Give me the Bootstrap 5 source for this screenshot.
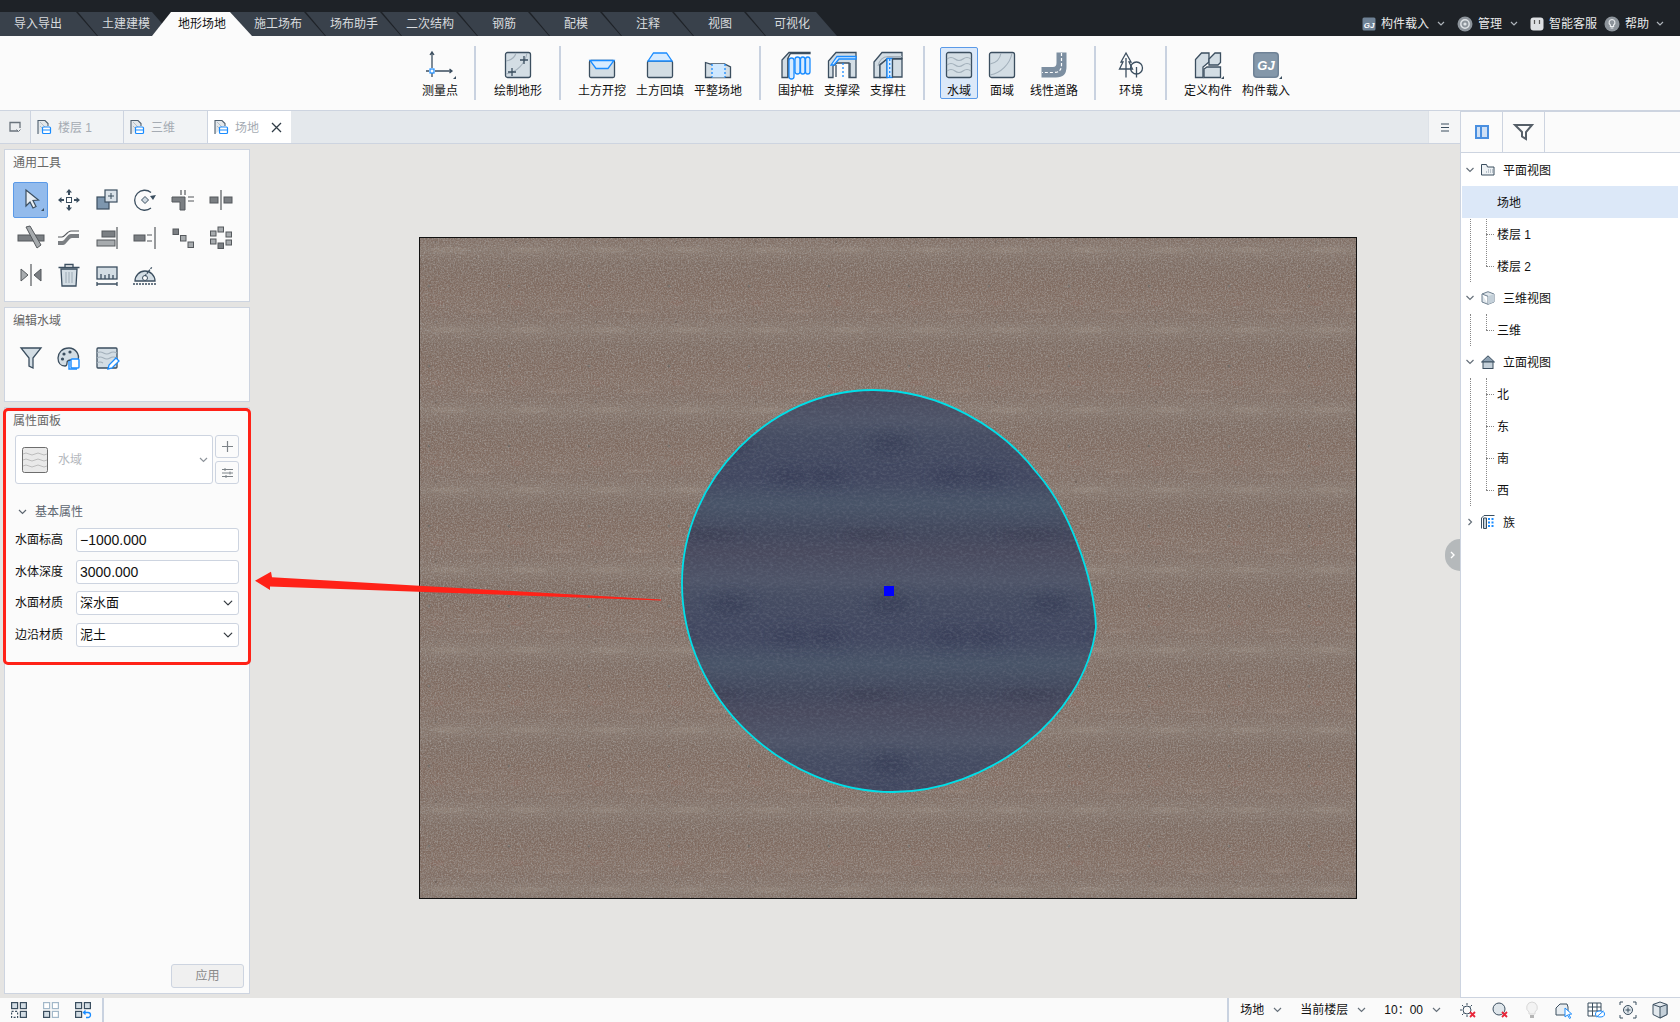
<!DOCTYPE html>
<html lang="zh">
<head>
<meta charset="utf-8">
<title>地形场地</title>
<link href="https://cdn.jsdelivr.net/npm/bootstrap@5.3.0/dist/css/bootstrap.min.css" rel="stylesheet">
<style>
html,body{height:100%;margin:0}
body{font:12px/14px "Liberation Sans","Noto Sans CJK SC",sans-serif;color:#111;overflow:hidden;background:#e5e4e2;position:relative}
svg{display:block;overflow:visible;flex:none}
.app{height:1022px}
.s{fill:none;stroke:#3b4e5f;stroke-width:1.3}
.sf{fill:#d3dde4;stroke:#3b4e5f;stroke-width:1.3}
.sl{fill:none;stroke:#a3b0bb;stroke-width:1.1}
.sb{fill:#d7ebff;stroke:#1a8cff;stroke-width:1.3}
.sbn{fill:none;stroke:#1a8cff;stroke-width:1.3}
.g{fill:#7b7f83;stroke:#55595d;stroke-width:1}
.gl{fill:#a7abae;stroke:#55595d;stroke-width:1}
.l{fill:none;stroke:#55595d;stroke-width:1.2}
.d{fill:#3b4e5f}
.tri{fill:#3b4e5f}
/* top bar */
.topbar{height:36px;background:#1e2227;color:#e9eaeb;flex:none}
.mtabs{height:24px;margin-top:12px}
.mtab{position:relative;height:24px;width:96px;margin-left:-20px;line-height:24px;text-align:center;color:#d8dbde;z-index:0}
.mtab::before{content:"";position:absolute;inset:0;background:#39414b;clip-path:polygon(0 0,calc(100% - 22px) 0,calc(100% - 1px) 100%,20px 100%);z-index:-1}
.mtab.first{width:98px;margin-left:0;padding-right:22px}
.mtab.first::before{clip-path:polygon(0 0,calc(100% - 22px) 0,calc(100% - 1px) 100%,0 100%)}
.mtab.two{width:92px}
.mtab.act{color:#111;z-index:2}
.mtab.act::before{left:-2px;right:-2px;background:#fbfbfb;clip-path:polygon(19px 0,calc(100% - 22px) 0,100% 100%,0 100%)}
.tools-r{height:36px;padding-top:12px;padding-right:16px}
.tr-i{height:24px}
.tr-txt{margin:0 8px 0 5px}
.tr-txt.n{margin-right:7px}
.tr-gap{margin-right:12px}
/* ribbon */
.ribbon{height:75px;background:#fbfbfb;border-bottom:1px solid #cdd4e0;padding-left:411px;flex:none}
.rb{width:58px;height:52px;margin-top:11px;border:1px solid transparent;border-radius:2px}
.rb svg{margin-top:2px}
.rb span{display:block;margin-top:4px;white-space:nowrap;text-align:center}
.rb.w46{width:46px}.rb.w38{width:38px}
.rb.on{background:#dce9f9;border-color:#5b9ae8;margin-right:1px}
.sep{width:2px;height:54px;margin:10px 12px 0;background:#c9d2e0}
.sep.a{margin:10px 13px 0 5px}
.sep.b{margin-right:15px}
.sep.c{margin-left:11px;margin-right:12px}
.sep.e{margin-left:11px}
/* tab bar */
.tabbar{height:33px;background:#e4e8ec;border-bottom:1px solid #cdd4e0;flex:none}
.dtab{height:32px;border-right:1px solid #cdd4e0;background:#f1f3f5;color:#a5abb3;padding-left:5px;gap:6px}
.dtab span{padding-top:2px}
.dtab.home{width:31px;justify-content:center;padding:0;background:#eceef0}
.dtab.t1{width:93px}.dtab.t2{width:84px}
.dtab.t3{width:83px;background:#fff;border:0}
.dtab .x{margin-left:6px}
.menu-b{width:32px;height:32px;background:#f4f5f6;border-left:1px solid #dde2e8}
/* left */
.leftcol{width:254px;padding:5px 0 4px 4px;gap:5px;flex:none}
.pnl{background:#fbfbfb;border:1px solid #cdd4e0;width:246px;color:#111}
.pt{color:#666;height:14px;line-height:14px;margin:6px 0 0 8px}
.p1{height:153px}.p2{height:95px}
.toolgrid{display:grid;grid-template-columns:repeat(6,38px);grid-auto-rows:37.7px;padding:12px 0 0 7px}
.ticon{width:35px;height:36px;margin-left:1px;border:1px solid transparent;border-radius:2px}
.ticon.on{background:#93bbec;border-color:#5b9ae8}
.p3{position:relative}
.red{position:absolute;left:-2px;top:0;width:248px;height:257px;border:3px solid #ff2218;border-radius:5px;pointer-events:none}
.sel{width:198px;height:49px;background:#fff;border:1px solid #cdd4e0;border-radius:3px;padding:0 4px 0 6px;color:#b4b8bd;margin:7px 2px 0 10px}
.swatch{margin-right:10px}
.sel .car{margin-left:auto}
.mini{width:24px;height:23px;background:#fbfbfb;border:1px solid #cdd4e0;border-radius:3px;padding:0}
.mgrp{gap:3px;margin-top:7px}
.sec{margin:21px 0 0 13px;color:#5d6670;gap:8px;height:14px}
.frow{height:31.5px;padding-left:10px}
.frow label{width:61px;flex:none;margin:5px 0 0}
.form-control.fc,.form-select.fc{width:163px;height:24px;min-height:24px;padding:0 2px 0 3px;font:14px/22px "Liberation Sans","Noto Sans CJK SC",sans-serif;border:1px solid #cdd4e0;border-radius:3px;color:#111;box-shadow:none}
.form-select.fc{font-size:13px;padding-left:3px;background-position:right 4px center;background-size:12px 10px}
.rows{margin-top:9px}
.apply{width:73px;height:24px;background:#f0f0f0;border:1px solid #cdd4e0;border-radius:3px;color:#8a8a8a;font-size:12px;line-height:14px;padding:0;margin:auto 5px 5px auto}
/* canvas */
.stage{padding:93px 0 0 165px;position:relative}
.handle{position:absolute;right:0;top:395px;width:15px;height:32px;background:#b5b9bb;border-radius:16px 0 0 16px}
/* right */
.rpanel{width:220px;background:#fff;border-left:1px solid #cdd4e0;border-bottom:1px solid #cdd4e0;flex:none;border-top:1px solid #cdd4e0}
.rtabs{height:41px;background:#fbfbfb;border-bottom:1px solid #cdd4e0;flex:none}
.rt{width:42px;height:40px;border-right:1px solid #cdd4e0}
.tree{margin:1px 0 0;padding:0;list-style:none}
.tn{height:32px;gap:0;padding-left:4px}
.tn .ic{margin:0 8px 0 6px}
.tl{padding-top:2px}
.tsub{position:relative;list-style:none;margin:0;padding:0}
.tsub::before{content:"";position:absolute;left:9px;top:0;bottom:0;border-left:1px dotted #888}
.tsub::after{content:"";position:absolute;left:25px;top:0;bottom:16px;border-left:1px dotted #888}
.tsub li{position:relative;height:32px;line-height:34px;padding-left:36px}
.tsub li::before{content:"";position:absolute;left:25px;width:8px;top:16px;border-top:1px dotted #888}
.tsub li.on{background:#dce8f8;margin:0 2px 0 1px;padding-left:35px;z-index:1}
.tsub li.on::before{display:none}
/* status */
.status{height:24px;background:#fafafa;flex:none}
.st-l{width:104px;border-right:2px solid #c9d2e0;height:24px;gap:16px;padding-left:11px}
.st-r{height:24px;border-left:2px solid #c9d2e0;padding-left:11px}
.st-t{margin-right:9px}
.st-g{margin-right:18px}
.st-ic{gap:14px;margin-left:18px;margin-right:11px}
.arrow{position:absolute;left:240px;top:565px}
</style>
</head>
<body>
<div class="app d-flex flex-column">
  <!-- top -->
  <header class="topbar d-flex justify-content-between">
    <nav class="mtabs d-flex">
      <div class="mtab first">导入导出</div><div class="mtab">土建建模</div><div class="mtab act">地形场地</div><div class="mtab">施工场布</div><div class="mtab">场布助手</div><div class="mtab">二次结构</div><div class="mtab two">钢筋</div><div class="mtab two">配模</div><div class="mtab two">注释</div><div class="mtab two">视图</div><div class="mtab two">可视化</div>
    </nav>
    <div class="tools-r d-flex align-items-center">
      <div class="tr-i d-flex align-items-center"><svg width="14" height="14" viewBox="0 0 14 14"><rect x=".5" y=".5" width="13" height="13" rx="1.5" fill="#6f8296"/><text x="7" y="10.5" text-anchor="middle" font-size="8" font-weight="700" font-style="italic" fill="#fff" font-family="Liberation Sans">GJ</text></svg><span class="tr-txt">构件载入</span><svg class="tr-gap" width="8" height="6" viewBox="0 0 8 6"><path d="M1 1l3 3 3-3" fill="none" stroke="#aeb4ba" stroke-width="1.2"/></svg></div>
      <div class="tr-i d-flex align-items-center"><svg width="16" height="16" viewBox="0 0 16 16"><circle cx="8" cy="8" r="7.5" fill="#8d949b"/><circle cx="8" cy="8" r="4.2" fill="none" stroke="#dfe3e6" stroke-width="1.5"/><circle cx="8" cy="8" r="1.6" fill="#dfe3e6"/></svg><span class="tr-txt">管理</span><svg class="tr-gap" width="8" height="6" viewBox="0 0 8 6"><path d="M1 1l3 3 3-3" fill="none" stroke="#aeb4ba" stroke-width="1.2"/></svg></div>
      <div class="tr-i d-flex align-items-center"><svg width="14" height="14" viewBox="0 0 14 14"><rect x=".5" y=".5" width="13" height="13" rx="3" fill="#dde0e3"/><path d="M4.5 3v4M9.500 3v4" stroke="#555" stroke-width="1.2"/></svg><span class="tr-txt n">智能客服</span></div>
      <div class="tr-i d-flex align-items-center"><svg width="16" height="16" viewBox="0 0 16 16"><circle cx="8" cy="8" r="7.5" fill="#8d949b"/><path d="M8 3.500a3 3 0 0 1 1.600 5.500V10.500H6.400V9A3 3 0 0 1 8 3.500zM6.600 12h2.800" fill="none" stroke="#eef0f2" stroke-width="1.1"/></svg><span class="tr-txt n">帮助</span><svg width="8" height="6" viewBox="0 0 8 6"><path d="M1 1l3 3 3-3" fill="none" stroke="#aeb4ba" stroke-width="1.2"/></svg></div>
    </div>
  </header>

  <!-- ribbon -->
  <section class="ribbon d-flex align-items-start">
    <div class="rb d-flex flex-column align-items-center"><svg width="30" height="30" viewBox="0 0 30 30"><path class="s" d="M7 3v15M7 23v4M4 21H1M10 21h17M5 5l2-3 2 3M24.500 19l2.500 2-2.500 2" stroke-width="1"/><rect x="5" y="19" width="4" height="4" fill="#fff" stroke="#1a8cff" stroke-width="1.2"/><path class="tri" d="M31 26v3h-3z"/></svg><span>测量点</span></div>
    <div class="sep a"></div>
    <div class="rb d-flex flex-column align-items-center"><svg width="30" height="30" viewBox="0 0 30 30"><rect class="sf" x="2.500" y="2.500" width="25" height="25" rx="2"/><path class="sl" d="M3 11C9 10 12 7 13 3M3 24C14 22 22 14 24 3"/><path class="s" d="M21 6v8M17 10h8M9 18v8M5 22h8" stroke-width="1"/></svg><span>绘制地形</span></div>
    <div class="sep"></div>
    <div class="rb d-flex flex-column align-items-center"><svg width="30" height="30" viewBox="0 0 30 30"><rect class="sf" x="2.500" y="10.500" width="25" height="17" rx="1.500"/><path class="sb" d="M3 10.500H27L21 18.500H9z" fill="#eaf4ff"/></svg><span>土方开挖</span></div>
    <div class="rb d-flex flex-column align-items-center"><svg width="30" height="30" viewBox="0 0 30 30"><rect class="sf" x="2.500" y="11" width="25" height="16.500" rx="1.500"/><path class="sb" d="M3 11L8.500 3H21.500L27 11z"/></svg><span>土方回填</span></div>
    <div class="rb d-flex flex-column align-items-center"><svg width="30" height="30" viewBox="0 0 30 30"><path class="sf" d="M2.500 12.500l5 1.500h14l6 3v10.500H2.500z"/><path d="M9 14h13v13.500H9z" fill="#cfe8ff"/><path class="sbn" stroke-dasharray="2 2" d="M9 14v13.500M22 14v13.500"/></svg><span>平整场地</span></div>
    <div class="sep"></div>
    <div class="rb w46 d-flex flex-column align-items-center"><svg width="30" height="30" viewBox="0 0 30 30"><path class="sf" d="M1 27.500V10L8 2.500h21v1H9.500L7 8v19.500z"/><path class="s" d="M7 27V8"/><rect class="sb" x="8" y="8" width="5" height="21" rx="2.500"/><rect class="sb" x="14" y="7" width="5" height="17" rx="2.500"/><rect class="sb" x="19.500" y="7" width="4.500" height="17" rx="2.250"/><rect class="sb" x="24.500" y="7" width="4.500" height="17" rx="2.250"/></svg><span>围护桩</span></div>
    <div class="rb w46 d-flex flex-column align-items-center"><svg width="30" height="30" viewBox="0 0 30 30"><path class="sf" d="M1.500 27.500V11L9 2.500h20v25H22V13H10l-4 3v11.500z"/><path class="sb" d="M4 15L10 6.500H29V9H12L7 15z"/><path class="s" d="M9 27V15M23 27V13"/><path class="sbn" stroke-dasharray="2 2" d="M16 13v14"/></svg><span>支撑梁</span></div>
    <div class="rb w46 d-flex flex-column align-items-center"><svg width="30" height="30" viewBox="0 0 30 30"><path class="sf" d="M1 27.500V12L9 2.500h20v6H15l-8 6v13z"/><path class="sl" d="M5 16Q7 7 15 6.500H29"/><path class="sf" d="M7 15l7-6v18.500H7z"/><rect class="sb" x="14" y="8.500" width="5.500" height="19"/><path class="sbn" stroke-dasharray="2 2" d="M16.700 9v18"/><path class="sf" d="M19.500 9H29v18H19.500z"/></svg><span>支撑柱</span></div>
    <div class="sep b"></div>
    <div class="rb w38 on d-flex flex-column align-items-center"><svg width="30" height="30" viewBox="0 0 30 30"><rect class="sf" x="2.500" y="2.500" width="25" height="25" rx="2"/><path class="sl" d="M3 9q4-3 8 0t8 0 8 0M3 15q4-3 8 0t8 0 8 0M3 21q4-3 8 0t8 0 8 0"/></svg><span>水域</span></div>
    <div class="rb w46 d-flex flex-column align-items-center"><svg width="30" height="30" viewBox="0 0 30 30"><rect class="sf" x="2.500" y="2.500" width="25" height="25" rx="2"/><path class="sl" d="M3 14C9 13 13 9 14 3M3 25C14 23 23 14 25 3"/></svg><span>面域</span></div>
    <div class="rb d-flex flex-column align-items-center"><svg width="30" height="30" viewBox="0 0 30 30"><path d="M17.500 2.500h10V17q0 10.500-10.500 10.500H2.500V17H14q3.500 0 3.500-4z" fill="#7d8fa1"/><path d="M22.500 3v12q0 7.500-7.500 7.500H3" fill="none" stroke="#fff" stroke-width="1.200" stroke-dasharray="3 2"/></svg><span>线性道路</span></div>
    <div class="sep e"></div>
    <div class="rb w46 d-flex flex-column align-items-center"><svg width="30" height="30" viewBox="0 0 30 30"><path class="s" d="M10 3l5 9h-2l3.500 7H3.500L7 12H5z"/><path class="s" d="M10 8v19.500"/><circle class="s" cx="20.500" cy="18" r="6"/><path class="s" d="M20.500 17v10.500"/></svg><span>环境</span></div>
    <div class="sep c"></div>
    <div class="rb d-flex flex-column align-items-center"><svg width="30" height="30" viewBox="0 0 30 30"><path class="sf" d="M2.500 27.500V9.500L8.500 3H16v9l-6 5v10.500z"/><path class="sf" d="M16 9l6-6h5.500v9.500L25 15H16z"/><path class="sf" d="M11 27.500V19l3-2h13.500v10.500z"/><path class="tri" d="M31 26v3h-3z"/></svg><span>定义构件</span></div>
    <div class="rb d-flex flex-column align-items-center"><svg width="30" height="30" viewBox="0 0 30 30"><rect x="2" y="2" width="26" height="26" rx="4" fill="#6f8296"/><rect x="3.500" y="3.500" width="23" height="23" rx="3" fill="#8497a9"/><text x="15" y="20" text-anchor="middle" font-size="13" font-weight="700" font-style="italic" fill="#fff" font-family="Liberation Sans">GJ</text><path class="tri" d="M31 26v3h-3z"/></svg><span>构件载入</span></div>
  </section>

  <!-- body -->
  <div class="d-flex flex-grow-1 overflow-hidden">
    <div class="d-flex flex-column flex-grow-1 overflow-hidden">
      <div class="tabbar d-flex">
        <div class="dtab home d-flex align-items-center"><svg width="14" height="14" viewBox="0 0 14 14"><path d="M10 11H2V2.500h10V8" fill="none" stroke="#6a737c" stroke-width="1.300"/><path d="M8.500 9.500l2 2 2-2" fill="none" stroke="#6a737c"/></svg></div>
        <div class="dtab t1 d-flex align-items-center"><svg width="16" height="17" viewBox="0 0 16 17"><path d="M2 15V1.500h7l3 3V7" fill="#e3e7ea" stroke="#4f5f6e" stroke-width="1.100"/><path d="M4 3l5 5M4 7l4 4" stroke="#b5bec6"/><rect x="6.500" y="8" width="8" height="6.500" rx="1" fill="#fff" stroke="#1a8cff" stroke-width="1.200"/><path d="M6.500 11h8" stroke="#1a8cff"/></svg><span>楼层 1</span></div>
        <div class="dtab t2 d-flex align-items-center"><svg width="16" height="17" viewBox="0 0 16 17"><path d="M2 15V1.500h7l3 3V7" fill="#e3e7ea" stroke="#4f5f6e" stroke-width="1.100"/><path d="M4 3l5 5M4 7l4 4" stroke="#b5bec6"/><rect x="6.500" y="8" width="8" height="6.500" rx="1" fill="#fff" stroke="#1a8cff" stroke-width="1.200"/><path d="M6.500 11h8" stroke="#1a8cff"/></svg><span>三维</span></div>
        <div class="dtab t3 d-flex align-items-center"><svg width="16" height="17" viewBox="0 0 16 17"><path d="M2 15V1.500h7l3 3V7" fill="#e3e7ea" stroke="#4f5f6e" stroke-width="1.100"/><path d="M4 3l5 5M4 7l4 4" stroke="#b5bec6"/><rect x="6.500" y="8" width="8" height="6.500" rx="1" fill="#fff" stroke="#1a8cff" stroke-width="1.200"/><path d="M6.500 11h8" stroke="#1a8cff"/></svg><span>场地</span><svg class="x" width="11" height="11" viewBox="0 0 11 11"><path d="M1 1l9 9M10 1l-9 9" stroke="#2f3b46" stroke-width="1.300"/></svg></div>
        <div class="menu-b ms-auto d-flex align-items-center justify-content-center"><svg width="8" height="9" viewBox="0 0 8 9"><path d="M0 1h8M0 4.500h8M0 8h8" stroke="#3b4e5f" stroke-width="1.200"/></svg></div>
      </div>
      <div class="d-flex flex-grow-1 overflow-hidden">
        <aside class="leftcol d-flex flex-column">
          <div class="pnl p1">
            <div class="pt">通用工具</div>
            <div class="toolgrid">
              <div class="ticon on d-flex align-items-center justify-content-center"><svg width="26" height="26" viewBox="0 0 26 26"><path d="M8 3v16l4-4 3 6 3-1.500-3-6 5.500-.5z" fill="#e9eef3" stroke="#3b4e5f" stroke-width="1.200"/><path class="tri" d="M26 21v3h-3z"/></svg></div>
              <div class="ticon d-flex align-items-center justify-content-center"><svg width="26" height="26" viewBox="0 0 26 26"><rect x="10.500" y="10.500" width="5" height="5" fill="#fff" stroke="#3b4e5f"/><path class="d" d="M13 2l3 3.500h-2V8h-2V5.500h-2zM13 24l3-3.500h-2V18h-2v2.500h-2zM2 13l3.500-3v2H8v2H5.500v2zM24 13l-3.500-3v2H18v2h2.500v2z"/></svg></div>
              <div class="ticon d-flex align-items-center justify-content-center"><svg width="26" height="26" viewBox="0 0 26 26"><rect x="3" y="10" width="12" height="12" fill="#7d96ae" stroke="#3b4e5f" stroke-width="1.200"/><rect x="11" y="3" width="12" height="12" fill="#dbe3ea" stroke="#3b4e5f" stroke-width="1.200"/><path d="M17 6v6M14 9h6" stroke="#3b4e5f"/></svg></div>
              <div class="ticon d-flex align-items-center justify-content-center"><svg width="26" height="26" viewBox="0 0 26 26"><path class="s" d="M19 5.500A10 10 0 1 0 19 21"/><path class="d" d="M18 9l6-1-3 5z"/><path d="M13 9.500l3.500 3.500-3.500 3.500-3.500-3.500z" fill="#cfd9e1" stroke="#3b4e5f"/></svg></div>
              <div class="ticon d-flex align-items-center justify-content-center"><svg width="26" height="26" viewBox="0 0 26 26"><path class="g" d="M2 10h13v13h-5V15H2z"/><path class="l" d="M11 3v5M15 3v5M18 10h6M18 14h6"/></svg></div>
              <div class="ticon d-flex align-items-center justify-content-center"><svg width="26" height="26" viewBox="0 0 26 26"><rect class="g" x="2" y="10" width="8" height="6"/><rect class="g" x="16" y="10" width="8" height="6"/><path class="l" d="M13 3v20"/></svg></div>
              <div class="ticon d-flex align-items-center justify-content-center"><svg width="26" height="26" viewBox="0 0 26 26"><rect class="g" x="0" y="10" width="26" height="6"/><path class="gl" d="M8 2l4-1 11 19-4 3z"/></svg></div>
              <div class="ticon d-flex align-items-center justify-content-center"><svg width="26" height="26" viewBox="0 0 26 26"><path class="l" d="M2 12h4c3 0 5-6 9-6h8"/><path d="M2 16h4c3 0 5-7 9-7h8v4h-7c-3 0-6 7-9 7H2z" fill="#7b7f83"/></svg></div>
              <div class="ticon d-flex align-items-center justify-content-center"><svg width="26" height="26" viewBox="0 0 26 26"><rect class="g" x="8" y="6" width="13" height="6"/><rect class="gl" x="3" y="15" width="18" height="6"/><path class="l" d="M23 2v22"/></svg></div>
              <div class="ticon d-flex align-items-center justify-content-center"><svg width="26" height="26" viewBox="0 0 26 26"><rect class="g" x="2" y="10" width="11" height="6"/><path class="l" d="M15 10h5M15 16h5M23 2v22"/></svg></div>
              <div class="ticon d-flex align-items-center justify-content-center"><svg width="26" height="26" viewBox="0 0 26 26"><rect class="g" x="3" y="4" width="5.500" height="5.500"/><rect class="gl" x="10.500" y="10.500" width="5.500" height="5.500"/><rect class="gl" x="18" y="17" width="5.500" height="5.500"/></svg></div>
              <div class="ticon d-flex align-items-center justify-content-center"><svg width="26" height="26" viewBox="0 0 26 26"><rect class="gl" x="10" y="2" width="5.500" height="5"/><rect class="gl" x="2.500" y="6" width="5.500" height="5"/><rect class="gl" x="18" y="7" width="5.500" height="5"/><rect class="gl" x="2.500" y="14" width="5.500" height="5"/><rect class="gl" x="18" y="15" width="5.500" height="5"/><rect class="g" x="10" y="18" width="5.500" height="5.500"/></svg></div>
              <div class="ticon d-flex align-items-center justify-content-center"><svg width="26" height="26" viewBox="0 0 26 26"><path class="gl" d="M3 7l7 6-7 6z"/><path class="g" d="M23 7l-7 6 7 6z"/><path class="l" d="M13 2v22"/></svg></div>
              <div class="ticon d-flex align-items-center justify-content-center"><svg width="26" height="26" viewBox="0 0 26 26"><path class="sf" d="M5 7h16l-1 17H6z"/><path class="s" d="M2.500 5.500h21M9 5V2.500h8V5"/><path class="sl" d="M10 10v11M13 10v11M16 10v11"/></svg></div>
              <div class="ticon d-flex align-items-center justify-content-center"><svg width="26" height="26" viewBox="0 0 26 26"><rect class="sf" x="3" y="5" width="20" height="12"/><path class="s" d="M7 17v-5M11 17v-4M15 17v-5M19 17v-4M3 22h20M3 20v4M23 20v4"/></svg></div>
              <div class="ticon d-flex align-items-center justify-content-center"><svg width="26" height="26" viewBox="0 0 26 26"><path class="sf" d="M3 19a10 10 0 0 1 20 0z"/><circle cx="13" cy="16" r="2.500" fill="#fff" stroke="#3b4e5f"/><path class="s" d="M13 14l7-9M1 22h24" stroke-dasharray="2 1"/></svg></div>
            </div>
          </div>
          <div class="pnl p2">
            <div class="pt">编辑水域</div>
            <div class="toolgrid">
              <div class="ticon d-flex align-items-center justify-content-center"><svg width="26" height="26" viewBox="0 0 26 26"><path class="sf" d="M3 3h20l-8 10v10l-4-2v-8z"/></svg></div>
              <div class="ticon d-flex align-items-center justify-content-center"><svg width="26" height="26" viewBox="0 0 26 26"><path class="sf" d="M13 3C6 3 2 8 2 13c0 5 3 8 7 8 2 0 2-2 2-3 0-2 2-3 4-3h7C24 9 19 3 13 3z"/><circle cx="8" cy="9" r="1.600" class="d"/><circle cx="14" cy="7" r="1.600" class="d"/><circle cx="6.500" cy="14" r="1.600" class="d"/><rect x="15" y="14" width="8" height="9" rx="1" fill="#fff" stroke="#1a8cff" stroke-width="1.400"/><path d="M13 16v8h8" fill="none" stroke="#1a8cff" stroke-width="1.400"/></svg></div>
              <div class="ticon d-flex align-items-center justify-content-center"><svg width="26" height="26" viewBox="0 0 26 26"><rect class="sf" x="3" y="3" width="20" height="20" rx="1"/><path class="sl" d="M3 8q3-2 6.500 0t6.500 0 7 0M3 13q3-2 6.500 0t6.500 0 7 0M3 18q3-2 6 0"/><path d="M14 24l1-4 7-7 3 3-7 7z" fill="#fff" stroke="#1a8cff" stroke-width="1.300"/></svg></div>
            </div>
          </div>
          <div class="pnl p3 flex-grow-1 d-flex flex-column">
            <div class="pt">属性面板</div>
            <div class="d-flex">
              <div class="sel d-flex align-items-center">
                <svg class="swatch" width="26" height="26" viewBox="0 0 26 26"><rect x=".5" y=".5" width="25" height="25" rx="2" fill="#e9e9e9" stroke="#6d6d6d"/><path d="M1 7q3-2 6 0t6 0 6 0 6 0M1 13q3-2 6 0t6 0 6 0 6 0M1 19q3-2 6 0t6 0 6 0 6 0" fill="none" stroke="#bdbdbd"/></svg>
                <span>水域</span>
                <svg class="car" width="9" height="6" viewBox="0 0 9 6"><path d="M1 1l3.500 3.500L8 1" fill="none" stroke="#8d939a" stroke-width="1.200"/></svg>
              </div>
              <div class="mgrp d-flex flex-column">
                <button class="btn mini d-flex align-items-center justify-content-center" type="button" aria-label="添加"><svg width="11" height="11" viewBox="0 0 11 11"><path d="M5.500 0v11M0 5.500h11" stroke="#7d8388" stroke-width="1.200"/></svg></button>
                <button class="btn mini d-flex align-items-center justify-content-center" type="button" aria-label="设置"><svg width="11" height="10" viewBox="0 0 11 10"><path d="M0 1.500h11M0 5h11M0 8.500h11" stroke="#7d8388"/><path d="M3 0v3M8 3.500v3M4 7v3" stroke="#7d8388"/></svg></button>
              </div>
            </div>
            <div class="sec d-flex align-items-center"><svg width="9" height="6" viewBox="0 0 9 6"><path d="M1 1l3.500 3.500L8 1" fill="none" stroke="#5d6670" stroke-width="1.200"/></svg><span>基本属性</span></div>
            <div class="rows">
              <div class="frow d-flex align-items-start"><label>水面标高</label><input class="form-control fc" value="−1000.000" readonly></div>
              <div class="frow d-flex align-items-start"><label>水体深度</label><input class="form-control fc" value="3000.000" readonly></div>
              <div class="frow d-flex align-items-start"><label>水面材质</label><select class="form-select fc"><option>深水面</option></select></div>
              <div class="frow d-flex align-items-start"><label>边沿材质</label><select class="form-select fc"><option>泥土</option></select></div>
            </div>
            <button class="btn apply" type="button">应用</button>
            <div class="red"></div>
          </div>
        </aside>
        <main class="stage flex-grow-1">
          <svg width="938" height="662" viewBox="419 237 938 662" aria-label="地形画布">
            <defs>
              <linearGradient id="gb" gradientUnits="userSpaceOnUse" x1="0" y1="237" x2="0" y2="317" spreadMethod="repeat">
                <stop offset="0" stop-color="#806d63"/><stop offset=".16" stop-color="#86766c"/><stop offset=".34" stop-color="#7e6c62"/><stop offset=".62" stop-color="#7f6a5f"/><stop offset=".8" stop-color="#826e63"/><stop offset="1" stop-color="#806d63"/>
              </linearGradient>
              <linearGradient id="wb" gradientUnits="userSpaceOnUse" x1="0" y1="437" x2="0" y2="597" spreadMethod="repeat">
                <stop offset="0" stop-color="#454c62"/><stop offset=".25" stop-color="#414760"/><stop offset=".42" stop-color="#485468"/><stop offset=".6" stop-color="#42475c"/><stop offset=".72" stop-color="#494a5e"/><stop offset=".9" stop-color="#4e5468"/><stop offset="1" stop-color="#454c62"/>
              </linearGradient>
              <filter id="grain" x="0" y="0" width="100%" height="100%"><feTurbulence type="fractalNoise" baseFrequency=".6" numOctaves="2" seed="4"/><feColorMatrix type="matrix" values="0 0 0 0 .3  0 0 0 0 .27  0 0 0 0 .25  2 0 0 0 -.85"/></filter>
              <filter id="grain2" x="0" y="0" width="100%" height="100%"><feTurbulence type="fractalNoise" baseFrequency=".7" numOctaves="2" seed="11"/><feColorMatrix type="matrix" values="0 0 0 0 .68  0 0 0 0 .66  0 0 0 0 .64  0 2 0 0 -.85"/></filter>
              <filter id="soft" x="-50%" y="-50%" width="200%" height="200%"><feGaussianBlur stdDeviation="7"/></filter>
              <filter id="fine" x="0" y="0" width="100%" height="100%"><feTurbulence type="fractalNoise" baseFrequency=".3 .45" numOctaves="3" seed="7"/><feColorMatrix type="matrix" values="0 0 0 0 .14  0 0 0 0 .16  0 0 0 0 .22  1.800 0 0 0 -.72"/></filter>
              <pattern id="gp" patternUnits="userSpaceOnUse" x="419" y="237" width="80" height="80"><circle cx="17" cy="5" r="1.300" fill="#5f5650" opacity=".5"/><circle cx="10" cy="49" r="1.500" fill="#5f6460" opacity=".6"/><circle cx="57" cy="21" r="1" fill="#5f5650" opacity=".4"/><ellipse cx="18" cy="66" rx="7" ry="3" fill="#86635a" opacity=".35"/><ellipse cx="60" cy="74" rx="14" ry="2" fill="#a08c80" opacity=".25"/><ellipse cx="30" cy="13" rx="18" ry="3" fill="#a09084" opacity=".25"/></pattern>
              <pattern id="wp" patternUnits="userSpaceOnUse" x="650" y="437" width="160" height="160"><g filter="url(#soft)" fill="#2f3550" opacity=".5"><ellipse cx="80" cy="167" rx="22" ry="10"/><ellipse cx="80" cy="7" rx="22" ry="10"/><ellipse cx="16" cy="40" rx="20" ry="8"/><ellipse cx="140" cy="40" rx="20" ry="8"/></g><g fill="#332f44" opacity=".5" filter="url(#soft)"><ellipse cx="60" cy="98" rx="30" ry="4"/></g></pattern>
              <clipPath id="wc"><path d="M682 583C682 480 770 390 873 390C940 390 1003 428 1037 473C1068 508 1094 575 1096 627C1085 720 985 792 893 792C785 792 682 700 682 583Z"/></clipPath>
            </defs>
            <rect x="419" y="237" width="938" height="662" fill="url(#gb)"/>
            <rect x="419" y="237" width="938" height="662" fill="url(#gp)"/>
            <rect x="419" y="237" width="938" height="662" filter="url(#grain)"/>
            <rect x="419" y="237" width="938" height="662" filter="url(#grain2)" opacity=".35"/>
            <rect x="419.500" y="237.500" width="937" height="661" fill="none" stroke="#111" stroke-width="1"/>
            <g clip-path="url(#wc)">
              <rect x="660" y="380" width="450" height="420" fill="url(#wb)"/>
              <rect x="660" y="380" width="450" height="420" fill="url(#wp)"/>
              <rect x="660" y="380" width="450" height="420" filter="url(#fine)" opacity=".6"/>
            </g>
            <path d="M682 583C682 480 770 390 873 390C940 390 1003 428 1037 473C1068 508 1094 575 1096 627C1085 720 985 792 893 792C785 792 682 700 682 583Z" fill="none" stroke="#00dfe8" stroke-width="1.800"/>
            <rect x="884" y="586" width="10" height="10" fill="#0000ff"/>
          </svg>
          <div class="handle d-flex align-items-center justify-content-center"><svg width="5" height="8" viewBox="0 0 5 8"><path d="M1 1l3 3-3 3" fill="none" stroke="#fff" stroke-width="1.400"/></svg></div>
        </main>
      </div>
    </div>
    <aside class="rpanel d-flex flex-column">
      <div class="rtabs d-flex">
        <div class="rt d-flex align-items-center justify-content-center"><svg width="14" height="14" viewBox="0 0 14 14"><rect x="1" y="1" width="12" height="12" fill="#cfe0f5" stroke="#4a8fe0" stroke-width="2"/><path d="M6 1v12" stroke="#4a8fe0" stroke-width="2"/></svg></div>
        <div class="rt d-flex align-items-center justify-content-center"><svg width="19" height="16" viewBox="0 0 19 16"><path d="M1 1h17l-6 7v7l-4-2.500V8z" fill="none" stroke="#565f68" stroke-width="2"/></svg></div>
      </div>
      <div class="tree">
        <div class="tn d-flex align-items-center"><svg width="10" height="6" viewBox="0 0 10 6"><path d="M1.500 1l3.500 3.500L8.500 1" fill="none" stroke="#66707a" stroke-width="1.200"/></svg><svg class="ic" width="14" height="12" viewBox="0 0 14 12"><path d="M.5 11V.5h5l1 2.500h6.500v8z" fill="#eef2f5" stroke="#3b4e5f"/><path d="M5 8h8M7 6h6" stroke="#8493a1" stroke-dasharray="1 1"/></svg><span class="tl">平面视图</span></div>
        <ul class="tsub"><li class="on">场地</li><li>楼层 1</li><li>楼层 2</li></ul>
        <div class="tn d-flex align-items-center"><svg width="10" height="6" viewBox="0 0 10 6"><path d="M1.500 1l3.500 3.500L8.500 1" fill="none" stroke="#66707a" stroke-width="1.200"/></svg><svg class="ic" width="14" height="14" viewBox="0 0 14 14"><path d="M7 .7l6 2.300v8l-6 2.300-6-2.300V3z" fill="#dfe6eb" stroke="#6d7f8f"/><path d="M1 3l6 2.300V13.300" fill="#fff" stroke="#6d7f8f"/><path d="M7 5.300L13 3v8l-6 2.300z" fill="#c4d0d9"/></svg><span class="tl">三维视图</span></div>
        <ul class="tsub"><li>三维</li></ul>
        <div class="tn d-flex align-items-center"><svg width="10" height="6" viewBox="0 0 10 6"><path d="M1.500 1l3.500 3.500L8.500 1" fill="none" stroke="#66707a" stroke-width="1.200"/></svg><svg class="ic" width="14" height="14" viewBox="0 0 14 14"><path d="M.5 7L7 .8 13.500 7z" fill="#8ea1b2" stroke="#3b4e5f"/><rect x="2" y="7" width="10" height="6.500" fill="#c4d0d9" stroke="#3b4e5f"/></svg><span class="tl">立面视图</span></div>
        <ul class="tsub"><li>北</li><li>东</li><li>南</li><li>西</li></ul>
        <div class="tn d-flex align-items-center"><svg width="10" height="8" viewBox="0 0 10 8"><path d="M3.500 1l3 3-3 3" fill="none" stroke="#66707a" stroke-width="1.200"/></svg><svg class="ic" width="14" height="14" viewBox="0 0 14 14"><path d="M.5 13.500V3L3 .5h10.500" fill="none" stroke="#3b4e5f"/><path d="M2.500 13.500V3h3v10.500z" fill="#c4d0d9" stroke="#3b4e5f"/><path fill="#1a8cff" d="M7 3h2v2H7zM10.500 3h2v2h-2zM7 6.500h2v2H7zM10.500 6.500h2v2h-2zM7 10h2v2H7zM10.500 10h2v2h-2z"/></svg><span class="tl">族</span></div>
      </div>
    </aside>
  </div>

  <!-- status -->
  <footer class="status d-flex justify-content-between">
    <div class="st-l d-flex align-items-center">
      <svg width="16" height="16" viewBox="0 0 16 16"><g fill="#d3dde4" stroke="#3b4e5f" stroke-width="1.200"><rect x=".6" y=".6" width="6" height="6"/><rect x="9.400" y=".6" width="6" height="6"/><rect x="9.400" y="9.400" width="6" height="6"/></g><rect x=".6" y="9.400" width="6" height="6" fill="none" stroke="#3b4e5f" stroke-dasharray="2 1.500" stroke-width="1.200"/></svg>
      <svg width="16" height="16" viewBox="0 0 16 16"><g fill="#fff" stroke="#a3b8c9" stroke-width="1.200"><rect x=".6" y=".6" width="6" height="6"/><rect x="9.400" y=".6" width="6" height="6"/><rect x="9.400" y="9.400" width="6" height="6"/></g><rect x=".6" y="9.400" width="6" height="6" fill="#d3dde4" stroke="#3b4e5f" stroke-width="1.200"/></svg>
      <svg width="16" height="16" viewBox="0 0 16 16"><g fill="#d3dde4" stroke="#3b4e5f" stroke-width="1.200"><rect x=".6" y=".6" width="6" height="6"/><rect x="9.400" y=".6" width="6" height="6"/><rect x=".6" y="9.400" width="6" height="6"/></g><path d="M9 10.500h4a2.500 2.500 0 0 1 0 5h-2M10.500 8.500l-2 2 2 2" fill="none" stroke="#1a8cff" stroke-width="1.300"/></svg>
    </div>
    <div class="st-r d-flex align-items-center">
      <span class="st-t">场地</span><svg class="st-g" width="9" height="6" viewBox="0 0 9 6"><path d="M1 1l3.500 3.500L8 1" fill="none" stroke="#66707a" stroke-width="1.200"/></svg>
      <span class="st-t">当前楼层</span><svg class="st-g" width="9" height="6" viewBox="0 0 9 6"><path d="M1 1l3.500 3.500L8 1" fill="none" stroke="#66707a" stroke-width="1.200"/></svg>
      <span class="st-t">10：00</span><svg width="9" height="6" viewBox="0 0 9 6"><path d="M1 1l3.500 3.500L8 1" fill="none" stroke="#66707a" stroke-width="1.200"/></svg>
      <div class="st-ic d-flex align-items-center">
        <svg width="18" height="18" viewBox="0 0 18 18"><circle cx="8" cy="9" r="4" fill="none" stroke="#3b4e5f"/><path d="M8 2v2M8 14v2M1 9h2M3 4l1.500 1.500M13 4l-1.500 1.500M3 14l1.500-1.500" stroke="#3b4e5f"/><path d="M11 11l5 5M16 11l-5 5" stroke="#e8263a" stroke-width="1.800"/></svg>
        <svg width="18" height="18" viewBox="0 0 18 18"><circle cx="8" cy="8" r="6" fill="#dfe6eb" stroke="#3b4e5f"/><path d="M11 11l5 5M16 11l-5 5" stroke="#e8263a" stroke-width="1.800"/></svg>
        <svg width="18" height="18" viewBox="0 0 18 18"><path d="M9 1a5.500 5.500 0 0 1 3 10v2H6v-2A5.500 5.500 0 0 1 9 1z" fill="#f3f3f3" stroke="#d8d8d8"/><rect x="7" y="14" width="4" height="3" fill="#b5b5b5"/></svg>
        <svg width="18" height="18" viewBox="0 0 18 18"><path d="M1 14V7l4-4h7l1 3v8z" fill="#e8edf1" stroke="#3b4e5f"/><path d="M10 7v9l2.500-2 2 3.500 1.200-.7-2-3.400 3-.4z" fill="#fff" stroke="#1a8cff"/></svg>
        <svg width="18" height="18" viewBox="0 0 18 18"><path d="M1 2h13v13H1zM1 6h13M1 10h13M5.500 2v13M10 2v13" fill="#fff" stroke="#3b4e5f"/><ellipse cx="13" cy="13" rx="4.500" ry="3" fill="#fff" stroke="#1a8cff"/><path d="M9.500 16l7-6" stroke="#1a8cff"/></svg>
        <svg width="18" height="18" viewBox="0 0 18 18"><path d="M1 4V1h3M14 1h3v3M17 14v3h-3M4 17H1v-3" fill="none" stroke="#3b4e5f"/><circle cx="9" cy="9" r="4.500" fill="#dfe6eb" stroke="#3b4e5f"/><path d="M9 6.500v5M6.500 9h5" stroke="#3b4e5f"/></svg>
        <svg width="18" height="18" viewBox="0 0 18 18"><path d="M9 1l7 2.500v10L9 17l-7-3.500v-10z" fill="#e3e9ee" stroke="#3b4e5f"/><path d="M9 6l7-2.500v10L9 17z" fill="#c4d0d9" stroke="#3b4e5f"/><path d="M2 3.500L9 6" stroke="#3b4e5f"/></svg>
      </div>
    </div>
  </footer>
</div>
<svg class="arrow" width="430" height="45" viewBox="240 565 430 45" aria-hidden="true"><path d="M255 580.700L271 571.700L272 577.200L661 599.600V600.400L270 586.500L270 590z" fill="#ff2218"/></svg>
</body>
</html>
